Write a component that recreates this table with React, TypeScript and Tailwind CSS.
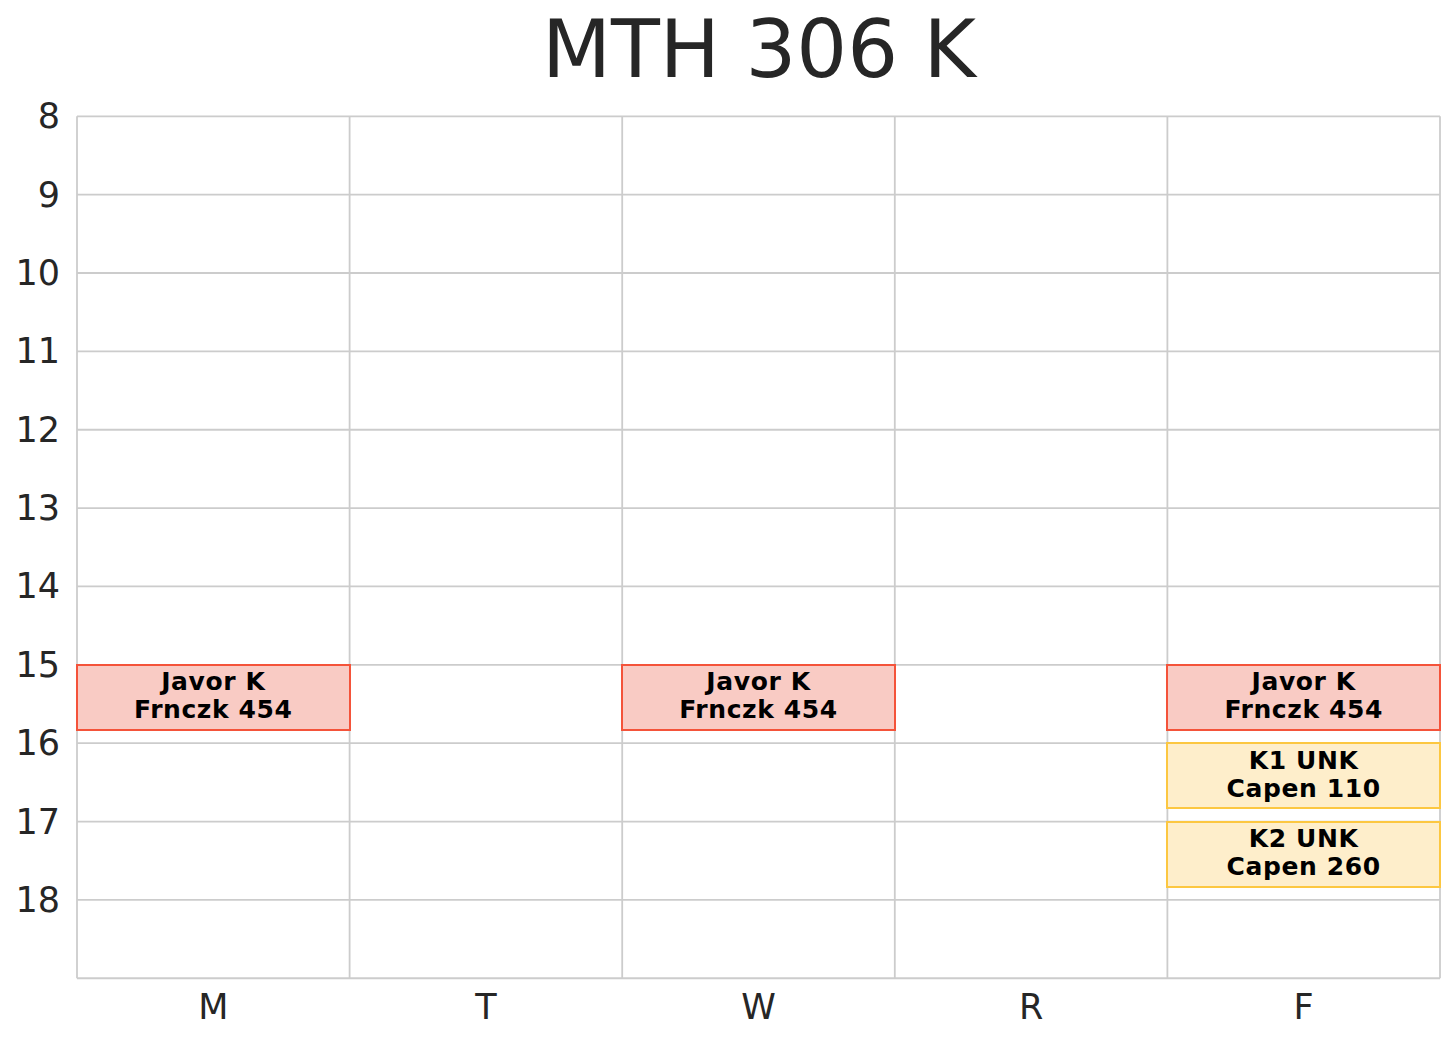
import React from "react";

const DAYS = ["M", "T", "W", "R", "F"];
const HOURS = [8, 9, 10, 11, 12, 13, 14, 15, 16, 17, 18];
const COL = 272.6;
const ROW = 78.36;
const X0 = 1;
const Y0 = 1.3;

type Ev = { day: number; start: number; end: number; l1: string; l2: string; kind: "lec" | "rec" };
const EVENTS: Ev[] = [
  { day: 0, start: 15, end: 15 + 50 / 60, l1: "Javor K", l2: "Frnczk 454", kind: "lec" },
  { day: 2, start: 15, end: 15 + 50 / 60, l1: "Javor K", l2: "Frnczk 454", kind: "lec" },
  { day: 4, start: 15, end: 15 + 50 / 60, l1: "Javor K", l2: "Frnczk 454", kind: "lec" },
  { day: 4, start: 16, end: 16 + 50 / 60, l1: "K1 UNK", l2: "Capen 110", kind: "rec" },
  { day: 4, start: 17, end: 17 + 50 / 60, l1: "K2 UNK", l2: "Capen 260", kind: "rec" },
];

const font = { fontFamily: '"DejaVu Sans", sans-serif' };

export default function App() {
  return (
    <div className="w-[1456px] h-[1040px] bg-white flex flex-col text-[#262626]" style={font}>
      <div className="h-[115px] flex items-start">
        <div className="ml-[76px] w-[1366px] text-center text-[80px] leading-none pt-[10px] text-[#262626]">
          MTH 306 K
        </div>
      </div>
      <div className="flex">
        <div className="w-[76px] h-[866px] flex flex-col pt-[1.3px]">
          {HOURS.map((h) => (
            <div key={h} className="h-[78.36px] relative">
              <div className="absolute right-[16px] top-0 -translate-y-1/2 text-[35px] leading-none text-[#262626]">
                {h}
              </div>
            </div>
          ))}
        </div>
        <div className="w-[1368px] h-[866px] relative">
          <svg className="absolute inset-0" width={1368} height={866}>
            {[0, 1, 2, 3, 4, 5].map((i) => (
              <line key={"v" + i} x1={X0 + i * COL} x2={X0 + i * COL} y1={Y0} y2={Y0 + 11 * ROW} stroke="#cccccc" strokeWidth={1.8} />
            ))}
            {Array.from({ length: 12 }).map((_, j) => (
              <line key={"h" + j} y1={Y0 + j * ROW} y2={Y0 + j * ROW} x1={X0} x2={X0 + 5 * COL} stroke="#cccccc" strokeWidth={1.8} />
            ))}
          </svg>
          {EVENTS.map((e, i) => (
            <div
              key={i}
              className={
                "absolute box-border flex flex-col items-center justify-center text-black font-bold text-[25px] leading-[28px] tracking-[0.6px] pb-[2px] " +
                (e.kind === "lec" ? "bg-[#f9cbc4] border-2 border-[#f4533a]" : "bg-[#feeecb] border-2 border-[#fcc741]")
              }
              style={{
                left: X0 + e.day * COL - 1,
                top: Y0 + (e.start - 8) * ROW - 1,
                width: COL + 2,
                height: (e.end - e.start) * ROW + 2,
              }}
            >
              <div>{e.l1}</div>
              <div>{e.l2}</div>
            </div>
          ))}
        </div>
      </div>
      <div className="flex ml-[77px] w-[1363px] pt-[9px]">
        {DAYS.map((d) => (
          <div key={d} className="flex-1 text-center text-[35px] leading-none text-[#262626]">
            {d}
          </div>
        ))}
      </div>
    </div>
  );
}
